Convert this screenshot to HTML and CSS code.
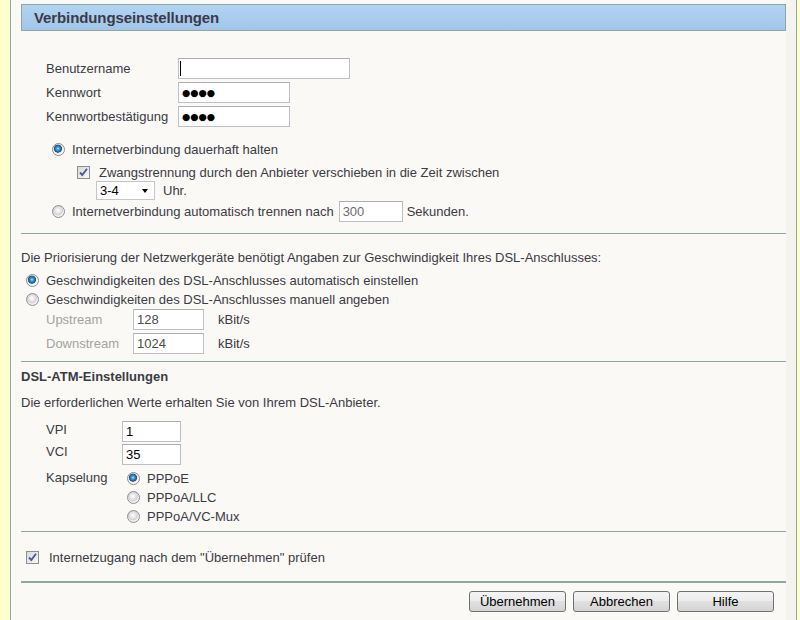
FILE: index.html
```html
<!DOCTYPE html>
<html lang="de">
<head>
<meta charset="utf-8">
<title>Verbindungseinstellungen</title>
<link rel="stylesheet" href="styles.css">
</head>
<body>
<div class="frame">
  <div class="page">
    <div class="header"><h1>Verbindungseinstellungen</h1></div>

    <div class="creds">
      <div class="row"><span class="lbl">Benutzername</span><div class="field w-user"><span class="caret"></span></div></div>
      <div class="row"><span class="lbl">Kennwort</span><div class="field w-pass"><span class="dots">●●●●</span></div></div>
      <div class="row"><span class="lbl">Kennwortbestätigung</span><div class="field w-pass"><span class="dots">●●●●</span></div></div>
    </div>

    <div class="opt r-keep"><span class="radio on"></span><span class="t-radio">Internetverbindung dauerhaft halten</span></div>
    <div class="opt r-chk"><span class="chk"><svg width="11" height="11" viewBox="0 0 11 11"><path d="M2 5.5 L4.3 8 L9 1.8" fill="none" stroke="#4a5b98" stroke-width="1.9"/></svg></span><span class="t-chk">Zwangstrennung durch den Anbieter verschieben in die Zeit zwischen</span></div>
    <div class="opt r-sel"><div class="select"><span>3-4</span><span class="arrow"></span></div><span class="t-uhr">Uhr.</span></div>
    <div class="opt r-disc"><span class="radio"></span><span class="t-radio">Internetverbindung automatisch trennen nach</span><div class="field w-sec grey">300</div><span>Sekunden.</span></div>

    <div class="sep"></div>

    <div class="para p-prio">Die Priorisierung der Netzwerkgeräte benötigt Angaben zur Geschwindigkeit Ihres DSL-Anschlusses:</div>
    <div class="opt r-auto"><span class="radio on"></span><span class="t-radio">Geschwindigkeiten des DSL-Anschlusses automatisch einstellen</span></div>
    <div class="opt r-man"><span class="radio"></span><span class="t-radio">Geschwindigkeiten des DSL-Anschlusses manuell angeben</span></div>
    <div class="opt speed"><span class="lbl-speed">Upstream</span><div class="field w-speed dim">128</div><span class="unit">kBit/s</span></div>
    <div class="opt speed speed2"><span class="lbl-speed">Downstream</span><div class="field w-speed dim">1024</div><span class="unit">kBit/s</span></div>

    <div class="sep sep-b"></div>

    <div class="subhead">DSL-ATM-Einstellungen</div>
    <div class="para p-atm">Die erforderlichen Werte erhalten Sie von Ihrem DSL-Anbieter.</div>
    <div class="atm atm-1"><span class="lbl-atm">VPI</span><div class="field w-atm">1</div></div>
    <div class="atm atm-2"><span class="lbl-atm">VCI</span><div class="field w-atm">35</div></div>
    <div class="atm kaps">
      <span class="lbl-atm">Kapselung</span>
      <div class="enc">
        <div class="enc-item"><span class="radio on"></span><span class="t-radio">PPPoE</span></div>
        <div class="enc-item"><span class="radio"></span><span class="t-radio">PPPoA/LLC</span></div>
        <div class="enc-item"><span class="radio"></span><span class="t-radio">PPPoA/VC-Mux</span></div>
      </div>
    </div>

    <div class="sep sep-c"></div>

    <div class="opt r-check"><span class="chk"><svg width="11" height="11" viewBox="0 0 11 11"><path d="M2 5.5 L4.3 8 L9 1.8" fill="none" stroke="#4a5b98" stroke-width="1.9"/></svg></span><span class="t-check">Internetzugang nach dem "Übernehmen" prüfen</span></div>

    <div class="sep-thick"></div>

    <div class="buttons">
      <button class="btn">Übernehmen</button>
      <button class="btn">Abbrechen</button>
      <button class="btn">Hilfe</button>
    </div>
  </div>
</div>
</body>
</html>
```

FILE: styles.css
```css
* { box-sizing: border-box; }

html, body {
  margin: 0;
  height: 620px;
  overflow: hidden;
}

body {
  background: #ffffcc;
  font-family: "Liberation Sans", Arial, sans-serif;
  font-size: 13px;
  color: #3b3b44;
}

.frame {
  margin-left: 10px;
  width: 787px;
  height: 620px;
  border-left: 1px solid #8ea7a3;
  border-right: 1px solid #8ea7a3;
  background: #f4f3ee;
}

.page {
  width: 775px;
  height: 620px;
  background: #faf9f5;
  padding: 4px 0 0 10px;
}

.header {
  height: 27px;
  border: 1px solid #8ca6a6;
  background: linear-gradient(#b2d4f3, #a2c6e8);
  display: flex;
  align-items: center;
  padding-left: 12px;
}

.header h1 {
  margin: 0;
  font-size: 15px;
  font-weight: bold;
  color: #3a3a48;
  letter-spacing: -0.1px;
}

/* credentials */
.creds {
  margin-top: 25px;
  padding-left: 25px;
}

.row {
  display: flex;
  align-items: center;
  height: 24px;
}

.lbl { width: 132px; }

.field {
  height: 21px;
  border: 1px solid #bcbfc5;
  border-top-color: #abadb3;
  background: #fff;
  display: flex;
  align-items: center;
  padding-left: 3px;
  color: #000;
  flex: none;
}

.w-user { width: 172px; padding-left: 1px; }
.w-pass { width: 112px; }
.w-sec { width: 64px; margin-left: 5px; margin-right: 4px; }
.w-speed { width: 71px; }
.w-atm { width: 59px; }

.grey { color: #6d6d6d; }
.dim { color: #4a4a4a; }

.caret {
  width: 1px;
  height: 15px;
  background: #000;
}

.dots {
  font-family: "DejaVu Sans", sans-serif;
  font-size: 9.5px;
  color: #000;
}

/* option rows */
.opt {
  display: flex;
  align-items: center;
}

.radio {
  width: 13px;
  height: 13px;
  flex: none;
  border-radius: 50%;
  border: 1px solid #8c8e90;
  background: radial-gradient(circle at 45% 40%, #ffffff 0, #e9e9e9 2.5px, #d2d2d2 4.5px, #f2f2f2 5.5px);
}

.radio.on {
  background: radial-gradient(circle at 45% 42%, #c6ecff 0, #3f9fdc 1.4px, #1a5f9c 3.4px, #2a4f73 3.8px, #e6e6e6 4.3px, #fbfbfb 5.5px);
}

.chk {
  width: 13px;
  height: 13px;
  flex: none;
  border: 1px solid #8c8e90;
  background: linear-gradient(135deg, #d9d9d9, #f8f8f8);
  display: flex;
  align-items: center;
  justify-content: center;
}

.t-radio { margin-left: 7px; }
.t-chk { margin-left: 9px; }
.t-check { margin-left: 10px; }

.r-keep { margin-top: 11px; height: 20px; padding-left: 31px; }
.r-chk { margin-top: 4px; height: 18px; padding-left: 56px; }
.r-sel { height: 19px; padding-left: 75px; }
.r-disc { margin-top: 1px; height: 21px; padding-left: 31px; }

.select {
  width: 59px;
  height: 19px;
  border: 1px solid #c4c6ca;
  background: #fff;
  color: #000;
  display: flex;
  align-items: center;
  padding-left: 3px;
  padding-right: 6px;
}

.arrow {
  margin-left: auto;
  width: 0;
  height: 0;
  border-left: 3.5px solid transparent;
  border-right: 3.5px solid transparent;
  border-top: 4px solid #000;
}

.t-uhr { margin-left: 8px; }

.sep {
  margin-top: 11px;
  border-top: 1px solid #8ea7a3;
}

.sep-b { margin-top: 7px; }
.sep-c { margin-top: 5px; }

/* speeds */
.para {
  display: flex;
  align-items: center;
}

.p-prio { margin-top: 13px; height: 20px; }
.r-auto { margin-top: 4px; height: 18px; padding-left: 5px; }
.r-man { margin-top: 1px; height: 18px; padding-left: 5px; }

.speed { margin-top: 1px; height: 21px; padding-left: 25px; }
.speed2 { margin-top: 3px; }
.lbl-speed { width: 87px; color: #a3a3a3; }
.unit { margin-left: 14px; }

/* ATM */
.subhead {
  margin-top: 5px;
  height: 18px;
  display: flex;
  align-items: center;
  font-weight: bold;
}

.p-atm { margin-top: 7px; height: 20px; }

.atm {
  display: flex;
  align-items: flex-start;
  padding-left: 25px;
}

.lbl-atm { width: 76px; flex: none; }

.atm-1 { margin-top: 9px; }
.atm-1 .lbl-atm { line-height: 17px; }
.atm-2 { margin-top: 2px; }
.atm-2 .lbl-atm { line-height: 16px; }

.kaps { margin-top: 4px; }
.kaps .lbl-atm { line-height: 18px; }

.enc { padding-left: 5px; }

.enc-item {
  height: 19px;
  display: flex;
  align-items: center;
}

/* footer */
.r-check { margin-top: 16px; height: 18px; padding-left: 5px; }

.sep-thick {
  margin-top: 15px;
  border-top: 2px solid #8ea7a3;
}

.buttons {
  margin-top: 8px;
  display: flex;
  justify-content: flex-end;
  gap: 7px;
  padding-right: 12px;
}

.btn {
  width: 97px;
  height: 21px;
  padding: 0;
  border: 1px solid #707070;
  border-radius: 3px;
  background: linear-gradient(#f4f4f4, #ececec 45%, #e0e0e0 50%, #d4d4d4);
  font-family: "Liberation Sans", Arial, sans-serif;
  font-size: 13px;
  color: #000;
}
```
